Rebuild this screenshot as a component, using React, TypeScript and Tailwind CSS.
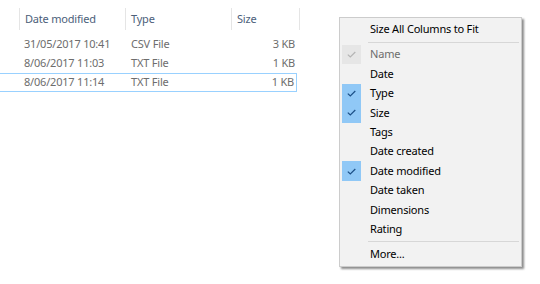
import React from 'react';

type Row = { date: string; type: string; size: string; focused?: boolean };

const rows: Row[] = [
  { date: '31/05/2017 10:41', type: 'CSV File', size: '3 KB' },
  { date: '8/06/2017 11:03', type: 'TXT File', size: '1 KB' },
  { date: '8/06/2017 11:14', type: 'TXT File', size: '1 KB', focused: true },
];

type MenuItem =
  | { kind: 'item'; label: string; check?: 'on' | 'disabled'; disabled?: boolean }
  | { kind: 'sep' };

const menu: MenuItem[] = [
  { kind: 'item', label: 'Size All Columns to Fit' },
  { kind: 'sep' },
  { kind: 'item', label: 'Name', check: 'disabled', disabled: true },
  { kind: 'item', label: 'Date' },
  { kind: 'item', label: 'Type', check: 'on' },
  { kind: 'item', label: 'Size', check: 'on' },
  { kind: 'item', label: 'Tags' },
  { kind: 'item', label: 'Date created' },
  { kind: 'item', label: 'Date modified', check: 'on' },
  { kind: 'item', label: 'Date taken' },
  { kind: 'item', label: 'Dimensions' },
  { kind: 'item', label: 'Rating' },
  { kind: 'sep' },
  { kind: 'item', label: 'More...' },
];

const Check: React.FC<{ color: string }> = ({ color }) => (
  <svg width="9" height="7" viewBox="0 0 9 7" fill="none">
    <path d="M0.8 3.6 L3.3 6 L8.3 1" stroke={color} strokeWidth="1.2" />
  </svg>
);

const App: React.FC = () => {
  return (
    <div
      className="relative w-[540px] h-[284px] bg-white overflow-hidden text-[11px] tracking-[-0.2px]"
      style={{ fontFamily: '"Noto Sans", "Segoe UI", sans-serif' }}
    >
      {/* File list (details view) */}
      <div className="pt-[8px] w-[300px]">
        <div className="flex h-[22px] ml-[19px]">
          <div className="w-[106px] border-l border-[#e5e5e5] pl-[5px] flex items-center text-[#4c607a]">
            Date modified
          </div>
          <div className="w-[106px] border-l border-[#e5e5e5] pl-[5px] flex items-center text-[#4c607a]">
            Type
          </div>
          <div className="w-[69px] border-l border-r border-[#e5e5e5] pl-[5px] flex items-center text-[#4c607a]">
            Size
          </div>
        </div>
        <div className="mt-[5px]">
          {rows.map((r, i) => (
            <div
              key={i}
              className={
                r.focused
                  ? 'flex h-[19px] w-[297px] border border-l-0 border-[#99d1ff] items-center text-[#6d6d6d]'
                  : 'flex h-[19px] w-[297px] items-center text-[#6d6d6d]'
              }
            >
              <div className="w-[125px] pl-[24px] whitespace-nowrap">{r.date}</div>
              <div className="w-[106px] pl-[6px] whitespace-nowrap">{r.type}</div>
              <div className="flex-1 text-right pr-[2px] whitespace-nowrap">{r.size}</div>
            </div>
          ))}
        </div>
      </div>

      {/* Column header context menu */}
      <div className="absolute left-[339px] top-[17px] w-[183px] bg-[#f2f2f2] border border-[#cccccc] py-[2px] shadow-[2px_2px_2px_rgba(0,0,0,0.45)]">
        {menu.map((m, i) =>
          m.kind === 'sep' ? (
            <div key={i} className="h-[5.6px] flex items-center pl-[28px] pr-[2px]">
              <div className="h-px w-full bg-[#d7d7d7]" />
            </div>
          ) : (
            <div key={i} className="flex items-center h-[19.4px]">
              <div
                className={
                  m.check === 'on'
                    ? 'ml-[2px] w-[19px] h-full flex items-center justify-center bg-[#90c8f6]'
                    : m.check === 'disabled'
                    ? 'ml-[2px] w-[19px] h-full flex items-center justify-center bg-[#e6e6e6]'
                    : 'ml-[2px] w-[19px] h-full'
                }
              >
                {m.check === 'on' && <Check color="#1b4f86" />}
                {m.check === 'disabled' && <Check color="#b4b4b4" />}
              </div>
              <span
                className={
                  m.disabled
                    ? 'pl-[9px] whitespace-nowrap text-[#6d6d6d]'
                    : 'pl-[9px] whitespace-nowrap text-black'
                }
              >
                {m.label}
              </span>
            </div>
          )
        )}
      </div>
    </div>
  );
};

export default App;
